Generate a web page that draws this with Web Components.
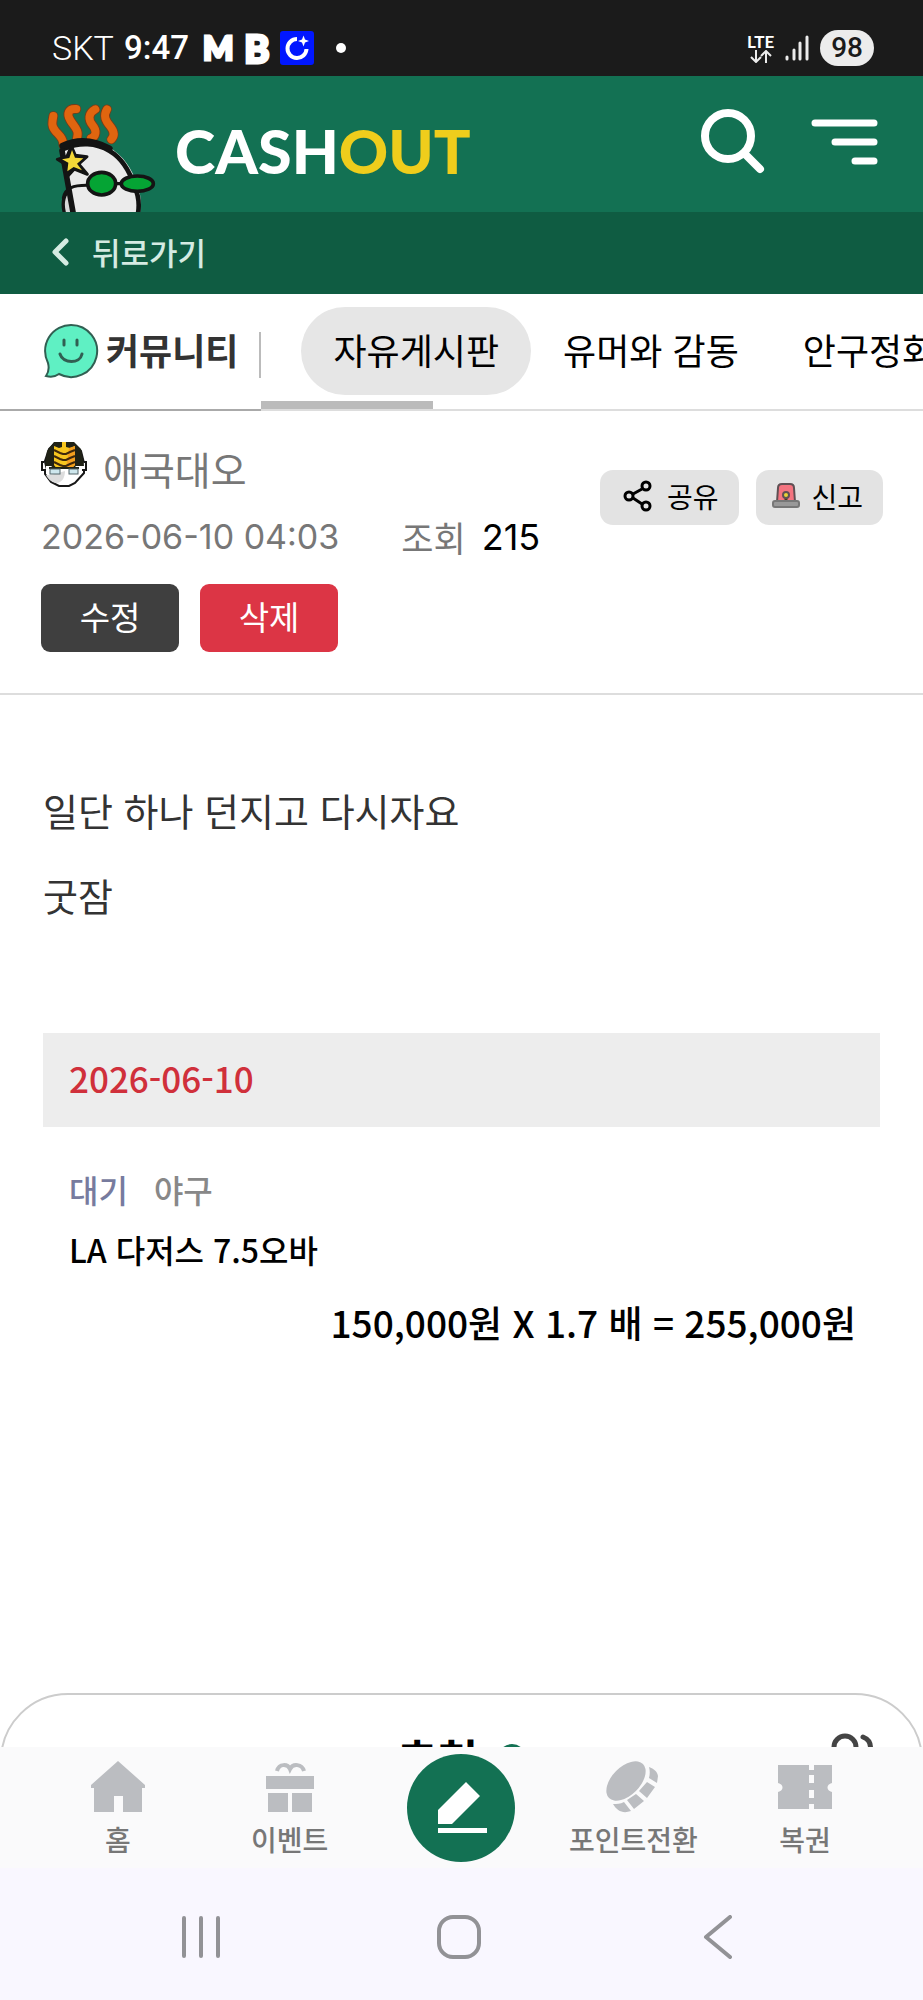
<!DOCTYPE html>
<html lang="ko">
<head>
<meta charset="utf-8">
<meta name="viewport" content="width=device-width, initial-scale=1">
<title>CASHOUT</title>
<style>
    body {
        height: 100vh;
        margin: 0;
        display: flex;
        flex-direction: column;
        font-family: "Noto Sans CJK KR", sans-serif;
        background-color: #fff;
        color: #000;
    }

    main {
        flex: 1;
        min-height: 0;
        display: flex;
        flex-direction: column;
        overflow-y: auto;
        scrollbar-width: none;
    }

    p {
        margin: 0;
    }
</style>
</head>
<body>
    <status-bar></status-bar>
    <site-header></site-header>
    <back-bar>뒤로가기</back-bar>
    <main>
        <board-tabs></board-tabs>
        <post-head></post-head>
        <post-body>
            <p>일단 하나 던지고 다시자요</p>
            <p>굿잠</p>
            <bet-slip slot="slip"></bet-slip>
        </post-body>
        <vote-panel></vote-panel>
    </main>
    <bottom-nav></bottom-nav>
    <system-nav></system-nav>

<script>
const reset = `
    * {
        margin: 0;
        padding: 0;
        box-sizing: border-box;
    }
    :host {
        display: block;
        flex-shrink: 0;
        box-sizing: border-box;
    }
    svg {
        display: block;
        flex-shrink: 0;
    }
    a {
        color: inherit;
        text-decoration: none;
    }
    button {
        border: 0;
        background: none;
        font: inherit;
        color: inherit;
        cursor: pointer;
    }
`;

class BaseElement extends HTMLElement {
    constructor() {
        super();
        this.shadowDOM = this.attachShadow({mode: 'open'});
    }

    connectedCallback() {
        this.render();
    }
}

class StatusBar extends BaseElement {
    render() {
        this.shadowDOM.innerHTML = `
        <style>
            ${reset}
            :host {
                display: flex;
                justify-content: space-between;
                align-items: center;
                height: 76px;
                padding: 20px 49px 0 52px;
                background-color: #1b1b1b;
                color: #fff;
                font-family: Roboto, sans-serif;
                font-size: 34px;
                line-height: 36px;
            }
            div {
                display: flex;
                align-items: center;
            }
            .carrier {
                font-weight: 300;
            }
            .time {
                margin-left: 10px;
                font-size: 33px;
                font-weight: 500;
            }
            .app {
                margin-left: 14px;
                font-family: Lato, sans-serif;
                font-size: 32px;
                font-weight: 900;
                -webkit-text-stroke: 3px #fff;
            }
            .app + .app {
                margin-left: 11px;
                font-size: 38px;
            }
            .app + svg {
                margin-left: 10px;
            }
            .dot {
                width: 10px;
                height: 10px;
                margin-left: 22px;
                border-radius: 50%;
                background-color: #fff;
            }
            .net {
                flex-direction: column;
                font-family: Lato, sans-serif;
                font-size: 17px;
                font-weight: 700;
                line-height: 16px;
            }
            .signal {
                margin: 0 11px;
            }
            .battery {
                height: 36px;
                padding: 0 11px;
                border-radius: 18px;
                background-color: #ececec;
                color: #1b1b1b;
                font-size: 28px;
                font-weight: 500;
            }
        </style>
        <div>
            <span class="carrier">SKT</span>
            <span class="time">9:47</span>
            <span class="app">M</span>
            <span class="app">B</span>
            <svg width="34" height="34" viewBox="0 0 34 34" fill="none">
                <rect width="34" height="34" rx="3" fill="#0117ff"/>
                <path d="M17 8a9.500 9.500 0 1 0 9.500 10" stroke="#fff" stroke-width="4"/>
                <path d="M23.500 4.500l1.500 4 4 1.500-4 1.500-1.500 4-1.500-4-4-1.500 4-1.500z" fill="#fff"/>
            </svg>
            <span class="dot"></span>
        </div>
        <div>
            <div class="net">
                <span>LTE</span>
                <svg width="22" height="13" viewBox="0 0 22 13" fill="none" stroke="#ececec" stroke-width="2">
                    <path d="M6 0v11M1 7l5 5 5-5M16 13V2M11 6l5-5 5 5"/>
                </svg>
            </div>
            <svg class="signal" width="24" height="26" viewBox="0 0 24 26" fill="none" stroke="#ececec" stroke-width="3" stroke-linecap="round">
                <path d="M2 22v2M9 15v9M15 8v16M22 2v22"/>
            </svg>
            <span class="battery">98</span>
        </div>
        `;
    }
}

class SiteHeader extends BaseElement {
    render() {
        this.shadowDOM.innerHTML = `
        <style>
            ${reset}
            :host {
                display: flex;
                justify-content: space-between;
                height: 136px;
                padding: 0 45px 0 30px;
                background-color: #137153;
                color: #fff;
            }
            .logo {
                display: flex;
                align-items: flex-end;
                gap: 5px;
                font-family: Lato, sans-serif;
                font-size: 61px;
                font-weight: 900;
                line-height: 122px;
            }
            .logo b {
                font-weight: 900;
                color: #efcd1c;
            }
            .actions {
                display: flex;
                align-items: center;
                gap: 44px;
                padding-bottom: 6px;
            }
        </style>
        <a href="#" class="logo">
            <svg width="140" height="122" viewBox="0 0 420 366" fill="none" stroke-linecap="round" stroke-linejoin="round">
                <g stroke="#7b3a16" stroke-width="29">
                    <path d="M70 78c-4 22-6 32 8 47s22 22 22 40"/>
                    <path d="M139 57c-24-2-30 14-18 34s28 30 20 53"/>
                    <path d="M196 58c-22 12-22 32-8 48s10 34-5 39"/>
                    <path d="M231 58c-12 20-4 34 9 50s14 30 4 40"/>
                </g>
                <g stroke="#e0650f" stroke-width="24">
                    <path d="M70 78c-4 22-6 32 8 47s22 22 22 40"/>
                    <path d="M139 57c-24-2-30 14-18 34s28 30 20 53"/>
                    <path d="M196 58c-22 12-22 32-8 48s10 34-5 39"/>
                    <path d="M231 58c-12 20-4 34 9 50s14 30 4 40"/>
                </g>
                <path d="M122 302c-20 6-28 35-18 70h30z" fill="#d8d8d8" stroke="#141414" stroke-width="10"/>
                <path d="M92 180C140 145 205 150 250 180c45 32 62 75 74 110 10 28 10 55 5 90H136L112 262z" fill="#ebebeb"/>
                <path d="M103 176c45-20 95-18 136 7 41 24 62 66 75 108 14 30 14 60 9 85" stroke="#141414" stroke-width="14"/>
                <path d="M98 168C140 148 190 150 238 176" stroke="#141414" stroke-width="20"/>
                <path d="M96 182l34 190" stroke="#141414" stroke-width="17"/>
                <path d="M170 286c-40 0-65 8-70 38" stroke="#141414" stroke-width="9"/>
                <path d="M124 168l12 28 35 4-25 22 26 31-39-16-22 24-3-37-26-16 29-9z" fill="#141414" stroke="#141414" stroke-width="9"/>
                <path d="M126 180l9 23 25 2-19 16 15 20-25-10-19 13 3-26-19-10 22-4z" fill="#f5d837"/>
                <path d="M258 281h14" stroke="#141414" stroke-width="10"/>
                <ellipse cx="215" cy="281" rx="42" ry="34" fill="#05a434" stroke="#141414" stroke-width="11"/>
                <ellipse cx="322" cy="281" rx="48" ry="23" fill="#05a434" stroke="#141414" stroke-width="11"/>
            </svg>
            <span>CASH<b>OUT</b></span>
        </a>
        <div class="actions">
            <button aria-label="검색">
                <svg width="66" height="66" viewBox="0 0 66 66" fill="none" stroke="#fff" stroke-width="8" stroke-linecap="round">
                    <circle cx="28" cy="28" r="23"/>
                    <path d="M45 46l15 15"/>
                </svg>
            </button>
            <button aria-label="메뉴">
                <svg width="68" height="66" viewBox="0 0 68 66" fill="none" stroke="#fff" stroke-width="7" stroke-linecap="round">
                    <path d="M5 15h59M25 34h39M45 53h19"/>
                </svg>
            </button>
        </div>
        `;
    }
}

class BackBar extends BaseElement {
    render() {
        this.shadowDOM.innerHTML = `
        <style>
            ${reset}
            :host {
                height: 82px;
                background-color: #0f5c42;
                color: #d5ebe2;
                font-size: 31px;
                font-weight: 500;
                line-height: 44px;
            }
            a {
                display: flex;
                align-items: center;
                gap: 22px;
                height: 100%;
                padding: 0 0 3px 51px;
            }
        </style>
        <a href="#">
            <svg width="19" height="28" viewBox="0 0 19 28" fill="none" stroke="currentColor" stroke-width="5" stroke-linecap="round" stroke-linejoin="round">
                <path d="M15 3L4 14l11 11"/>
            </svg>
            <slot></slot>
        </a>
        `;
    }
}

class BoardTabs extends BaseElement {
    render() {
        this.shadowDOM.innerHTML = `
        <style>
            ${reset}
            :host {
                display: flex;
                height: 117px;
                font-size: 36px;
                line-height: 44px;
            }
            h2 {
                display: flex;
                align-items: center;
                gap: 7px;
                padding: 0 0 2px 43px;
                border-bottom: 2px solid #aaa;
                font-size: 36px;
                font-weight: 700;
                color: #333;
            }
            h2 span {
                padding-bottom: 4px;
            }
            h2::after {
                content: "";
                width: 2px;
                height: 46px;
                margin: 9px 0 0 14px;
                background-color: #bbb;
            }
            nav {
                flex: 1;
                min-width: 0;
                display: flex;
                flex-direction: column;
                overflow: hidden;
                border-bottom: 2px solid #ddd;
            }
            .list {
                display: flex;
                padding: 13px 0 6px 40px;
            }
            .list a {
                flex-shrink: 0;
                padding: 20px 32px 24px;
                border-radius: 44px;
            }
            .list a[aria-current] {
                background-color: #e6e6e6;
            }
            .thumb {
                width: 172px;
                height: 10px;
                margin-bottom: -2px;
                background-color: #bbb;
            }
        </style>
        <h2>
            <svg width="56" height="56" viewBox="0 0 56 56" fill="none" stroke="#315f52" stroke-width="2" stroke-linecap="round">
                <path d="M28 2a26 26 0 1 1-12 49c-4 3-9 3-13 2 3-4 3-9 2-13A26 26 0 0 1 28 2z" fill="#5ff0c3"/>
                <path d="M21 17v5M34 17v5M17 31c3 10 20 10 22 0" stroke-width="3"/>
            </svg>
            <span>커뮤니티</span>
        </h2>
        <nav>
            <div class="list">
                <a href="#" aria-current="page">자유게시판</a>
                <a href="#">유머와 감동</a>
                <a href="#">안구정화</a>
            </div>
            <div class="thumb"></div>
        </nav>
        `;
    }
}

class PostHead extends BaseElement {
    render() {
        this.shadowDOM.innerHTML = `
        <style>
            ${reset}
            :host {
                display: flex;
                justify-content: space-between;
                align-items: flex-start;
                padding: 30px 40px 41px 41px;
                border-bottom: 2px solid #ddd;
                color: #777;
            }
            .author {
                display: flex;
                gap: 16px;
                font-size: 39px;
                line-height: 54px;
            }
            .meta {
                display: flex;
                align-items: center;
                margin: 18px 0 23px;
                font-size: 35px;
                line-height: 48px;
            }
            time {
                font-family: Inter, sans-serif;
                font-size: 34px;
            }
            .views {
                margin: 0 16px 0 62px;
            }
            .meta b {
                font-family: Inter, sans-serif;
                font-size: 36px;
                font-weight: 400;
                color: #000;
            }
            .owner {
                display: flex;
                gap: 21px;
            }
            .owner button {
                width: 138px;
                height: 68px;
                padding-bottom: 4px;
                border-radius: 9px;
                background-color: #3f3f3f;
                font-size: 33px;
                color: #fff;
            }
            .owner .delete {
                background-color: #dc3545;
            }
            .tools {
                display: flex;
                gap: 17px;
                padding-top: 29px;
            }
            .tools button {
                display: flex;
                align-items: center;
                height: 55px;
                padding: 0 20px 3px 16px;
                border-radius: 13px;
                background-color: #e3e3e3;
                font-size: 28px;
                color: #000;
                gap: 11px;
            }
            .tools .share {
                padding: 0 21px 3px 23px;
                gap: 14px;
            }
        </style>
        <div>
            <div class="author">
                <svg width="46" height="46" viewBox="0 0 46 46">
                    <path d="M14 2h18l8 8 3 12v10l-9 10-6 3H18l-8-4-6-8V20l4-12z" fill="#fff" stroke="#181818" stroke-width="2"/>
                    <path d="M5 34c8 0 12-2 19-4 0 5-2 12-9 12-5-1-8-4-10-8z" fill="#ddd"/>
                    <path d="M3 21H1v8h4M43 21h2v8h-4" fill="#fff" stroke="#181818" stroke-width="2"/>
                    <path d="M13 1h20l7 7 3 17h-8l-3 3H14l-4-3H4L6 10z" fill="#202216"/>
                    <path d="M13 5l5 2 3-1V1h4v5l4 1 5-2v19l-4 4h-14l-3-4z" fill="#f7c61f"/>
                    <path d="M28 7l6-2v19l-4 4h-5z" fill="#f5a01f"/>
                    <path d="M13 9l6 3 3 1h3l4-2 5-2M13 15l6 3 3 1h3l4-2 5-2M13 21l6 3 3 1h3l4-2 5-2" fill="none" stroke="#40290b" stroke-width="2"/>
                    <path d="M8 27h30" stroke="#202216" stroke-width="2"/>
                    <rect x="9" y="28" width="10" height="5" fill="#cee7ed" stroke="#55666b"/>
                    <rect x="28" y="28" width="9" height="5" fill="#cee7ed" stroke="#55666b"/>
                </svg>
                <span>애국대오</span>
            </div>
            <div class="meta">
                <time>2026-06-10 04:03</time>
                <span class="views">조회</span>
                <b>215</b>
            </div>
            <div class="owner">
                <button>수정</button>
                <button class="delete">삭제</button>
            </div>
        </div>
        <div class="tools">
            <button class="share">
                <svg width="30" height="32" viewBox="0 0 30 32" fill="none" stroke="#000" stroke-width="3">
                    <path d="M10 14l9-5M10 18l9 6"/>
                    <circle cx="6" cy="16" r="4"/>
                    <circle cx="23" cy="6" r="4"/>
                    <circle cx="23" cy="26" r="4"/>
                </svg>
                공유
            </button>
            <button>
                <svg width="28" height="28" viewBox="0 0 28 28" stroke="#5f5054" stroke-width="2">
                    <path d="M5 20L6 6c0-3 1-4 4-4h8c3 0 4 1 4 4l1 14z" fill="#f47480"/>
                    <rect x="1" y="19" width="26" height="6" rx="2" fill="#999" stroke="#777"/>
                    <path d="M14 18v-5" stroke="#463c20" stroke-width="3"/>
                    <circle cx="14" cy="13" r="3" fill="#e7d235"/>
                </svg>
                신고
            </button>
        </div>
        `;
    }
}

class PostBody extends BaseElement {
    render() {
        this.shadowDOM.innerHTML = `
        <style>
            ${reset}
            :host {
                padding: 72px 43px 0;
                font-size: 38px;
                line-height: 85px;
                color: #333;
            }
            ::slotted(bet-slip) {
                margin-top: 96px;
            }
        </style>
        <slot></slot>
        <slot name="slip"></slot>
        `;
    }
}

class BetSlip extends BaseElement {
    render() {
        this.shadowDOM.innerHTML = `
        <style>
            ${reset}
            :host {
                font-size: 32px;
                font-weight: 500;
                line-height: 60px;
                color: #000;
            }
            h3 {
                padding: 0 26px 4px;
                background-color: #ededed;
                font-size: 35px;
                font-weight: 500;
                line-height: 90px;
                color: #d0303b;
            }
            .game {
                padding: 32px 24px 0 26px;
            }
            .state {
                display: flex;
                gap: 26px;
                color: #888;
            }
            .state b {
                font-weight: 500;
                color: #777b9e;
            }
            .total {
                margin-top: 13px;
                font-size: 37px;
                text-align: right;
            }
        </style>
        <h3>2026-06-10</h3>
        <div class="game">
            <p class="state"><b>대기</b><span>야구</span></p>
            <p>LA 다저스 7.5오바</p>
            <p class="total">150,000원 X 1.7 배 = 255,000원</p>
        </div>
        `;
    }
}

class VotePanel extends BaseElement {
    render() {
        this.shadowDOM.innerHTML = `
        <style>
            ${reset}
            :host {
                display: grid;
                grid-template-columns: 1fr auto 1fr;
                align-items: start;
                margin-top: 341px;
                padding: 35px 44px 40px;
                border: 2px solid #ccc;
                border-radius: 68px 68px 0 0;
            }
            h2 {
                grid-column: 2;
                display: flex;
                align-items: center;
                gap: 20px;
                font-size: 44px;
                line-height: 56px;
            }
            i {
                width: 28px;
                height: 28px;
                border-radius: 50%;
                background-color: #137153;
            }
            svg {
                justify-self: end;
            }
        </style>
        <h2>추천<i></i></h2>
        <svg width="50" height="50" viewBox="0 0 50 50" fill="none" stroke="#444" stroke-width="5" stroke-linecap="round">
            <circle cx="18" cy="17" r="11"/>
            <path d="M36 7c10 4 10 17 0 20M3 46c2-18 28-18 30 0M41 34c4 3 5 8 6 12"/>
        </svg>
        `;
    }
}

class BottomNav extends BaseElement {
    render() {
        this.shadowDOM.innerHTML = `
        <style>
            ${reset}
            :host {
                background-color: #fafafb;
                font-size: 28px;
                font-weight: 500;
                line-height: 40px;
                color: #777;
            }
            nav {
                display: flex;
                align-items: flex-start;
                padding: 7px 32px 5px;
            }
            a {
                flex: 1 0 0;
                display: flex;
                flex-direction: column;
                align-items: center;
                gap: 6px;
                padding-top: 7px;
                white-space: nowrap;
            }
            a svg {
                fill: #bbbdc1;
            }
            .write {
                padding: 0;
            }
        </style>
        <nav>
            <a href="#">
                <svg width="54" height="52" viewBox="0 0 54 52"><path d="M27 0l27 24v3h-3v24H32V35h-9v16H3V27H0v-3z"/></svg>
                <span>홈</span>
            </a>
            <a href="#">
                <svg width="54" height="52" viewBox="0 0 54 52">
                    <path d="M3 15h48v13H3zM5 32h20v19H5zM29 32h20v19H29z"/>
                    <path d="M14 10c2-8 11-7 13-2 3-6 12-5 14 2" fill="none" stroke="#bbbdc1" stroke-width="4"/>
                </svg>
                <span>이벤트</span>
            </a>
            <a href="#" class="write" aria-label="글쓰기">
                <svg width="109" height="109" viewBox="0 0 109 109">
                    <circle cx="54" cy="54" r="54" fill="#137153"/>
                    <path d="M31 74h49v5H31zM31 56L59 28l14 14-28 28H31z" fill="#fff"/>
                </svg>
            </a>
            <a href="#">
                <svg width="54" height="52" viewBox="0 0 54 52">
                    <ellipse cx="20" cy="20" rx="24" ry="14" transform="rotate(-45 20 20)"/>
                    <path d="M43 6c5 2 8 4 9 9l-1 7-8-5c1-4 1-7 0-11zM41 21l8 5-8 11-8-7zM30 33l8 7-10 8-7-9zM18 41l7 9c-8 3-14 0-18-7 4 0 7 0 11-2z"/>
                </svg>
                <span>포인트전환</span>
            </a>
            <a href="#">
                <svg width="54" height="52" viewBox="0 0 54 52">
                    <path d="M0 4h31v5h5V4h18v18c-6 1-6 8 0 9v17H36v-5h-5v5H0V31c6-1 6-8 0-9z"/>
                    <path d="M31 14h5v8h-5zM31 29h5v8h-5z" fill="#fafafb"/>
                </svg>
                <span>복권</span>
            </a>
        </nav>
        `;
    }
}

class SystemNav extends BaseElement {
    render() {
        this.shadowDOM.innerHTML = `
        <style>
            ${reset}
            :host {
                display: flex;
                justify-content: space-around;
                align-items: center;
                height: 132px;
                padding: 5px 76px 0 72px;
                background-color: #f9f7ff;
            }
            svg {
                fill: none;
                stroke: #929296;
                stroke-width: 4;
                stroke-linecap: round;
                stroke-linejoin: round;
            }
        </style>
        <button aria-label="최근 앱"><svg width="44" height="44" viewBox="0 0 44 44"><path d="M5 3v38M22 3v38M39 3v38"/></svg></button>
        <button aria-label="홈"><svg width="44" height="44" viewBox="0 0 44 44"><rect x="2" y="2" width="40" height="40" rx="14"/></svg></button>
        <button aria-label="뒤로"><svg width="44" height="44" viewBox="0 0 44 44"><path d="M34 2L10 22l24 20"/></svg></button>
        `;
    }
}

customElements.define('status-bar', StatusBar);
customElements.define('site-header', SiteHeader);
customElements.define('back-bar', BackBar);
customElements.define('board-tabs', BoardTabs);
customElements.define('post-head', PostHead);
customElements.define('post-body', PostBody);
customElements.define('bet-slip', BetSlip);
customElements.define('vote-panel', VotePanel);
customElements.define('bottom-nav', BottomNav);
customElements.define('system-nav', SystemNav);
</script>
</body>
</html>
